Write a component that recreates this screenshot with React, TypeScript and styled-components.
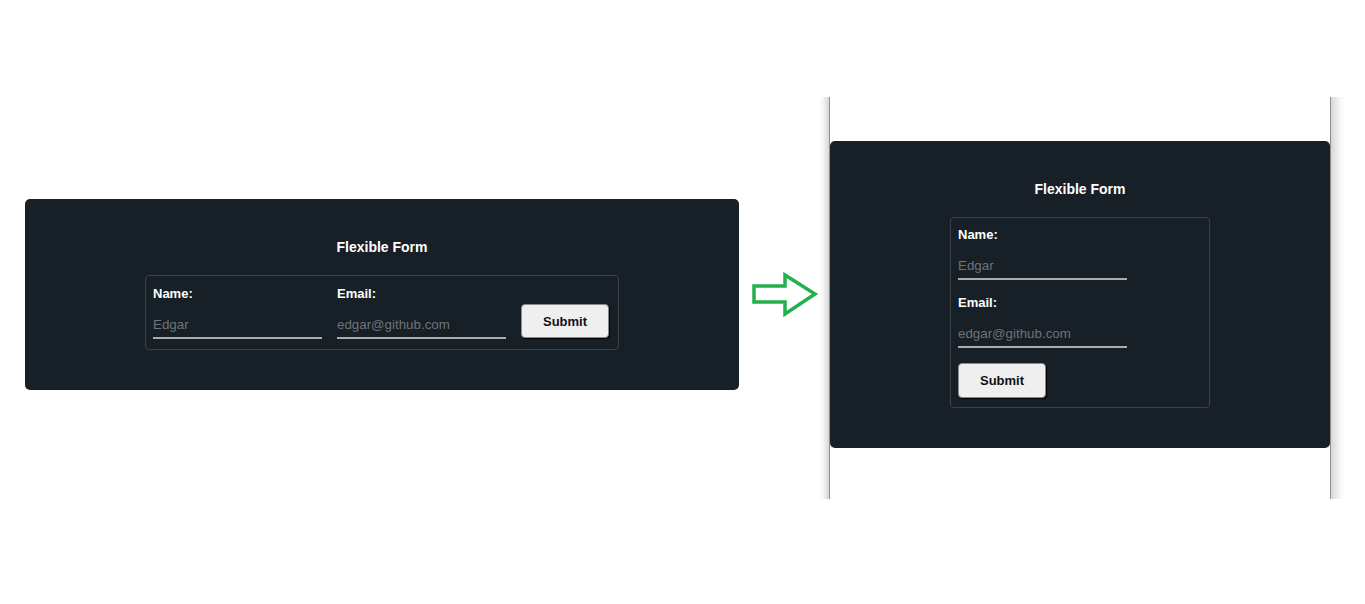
import React from "react";
import styled, { createGlobalStyle } from "styled-components";

const Global = createGlobalStyle`
  html, body { margin: 0; padding: 0; background: #ffffff; }
  body { font-family: "Liberation Sans", Arial, sans-serif; }
`;

const Page = styled.div`
  display: flex;
  align-items: flex-start;
  width: 1365px;
  height: 604px;
  padding-left: 25px;
  box-sizing: border-box;
  background: #ffffff;
  overflow: hidden;
`;

const Card = styled.section<{ $width: number; $top?: number }>`
  width: ${(p) => p.$width}px;
  margin-top: ${(p) => p.$top ?? 0}px;
  box-sizing: border-box;
  background: #171f27;
  border-radius: 5px;
  padding: 40px 0;
  display: flex;
  flex-direction: column;
  align-items: center;
  gap: 20px;
`;

const Title = styled.h2`
  margin: 0;
  font-size: 14px;
  line-height: 16px;
  font-weight: 700;
  color: #ffffff;
`;

const Fieldset = styled.fieldset<{ $stacked?: boolean }>`
  margin: 0;
  min-width: 0;
  box-sizing: border-box;
  border: 1px solid #3b424a;
  border-radius: 4px;
  padding: ${(p) => (p.$stacked ? "9px 9px 9px 7px" : "10px 9px 10px 7px")};
  display: flex;
  flex-direction: ${(p) => (p.$stacked ? "column" : "row")};
  align-items: ${(p) => (p.$stacked ? "flex-start" : "flex-end")};
  gap: 15px;
  width: ${(p) => (p.$stacked ? "260px" : "auto")};
`;

const Field = styled.div`
  display: flex;
  flex-direction: column;
  gap: 6px;
`;

const Label = styled.label`
  font-size: 13px;
  line-height: 15px;
  font-weight: 700;
  color: #ffffff;
`;

const Input = styled.input`
  width: 169px;
  box-sizing: border-box;
  height: 32px;
  padding: 10px 0 5px;
  background: transparent;
  border: none;
  border-bottom: 2px solid #a9abad;
  outline: none;
  font-family: "Liberation Sans", Arial, sans-serif;
  font-size: 13.33px;
  line-height: 15px;
  color: #ffffff;
  &::placeholder { color: #6f7378; }
`;

const Button = styled.button<{ $stacked?: boolean }>`
  width: 88px;
  height: ${(p) => (p.$stacked ? 35 : 34)}px;
  margin-bottom: ${(p) => (p.$stacked ? 0 : 1)}px;
  box-sizing: border-box;
  background: #efefef;
  border: 1px solid #8a8a8a;
  border-radius: 4px;
  box-shadow: 1px 1px 1px #000000;
  font-family: "Liberation Sans", Arial, sans-serif;
  font-size: 13px;
  font-weight: 700;
  color: #111111;
  cursor: pointer;
`;

const Arrow = styled.svg`
  flex: none;
  margin-left: 10px;
  margin-top: 270px;
`;

const Frame = styled.div`
  display: flex;
  margin-top: 97px;
  height: 402px;
`;

const Shade = styled.div<{ $side: "left" | "right" }>`
  width: ${(p) => (p.$side === "left" ? 10 : 14)}px;
  background: linear-gradient(
    ${(p) => (p.$side === "left" ? "to left" : "to right")},
    rgba(0, 0, 0, 0.16),
    rgba(0, 0, 0, 0.04) 60%,
    rgba(0, 0, 0, 0)
  );
`;

const Screen = styled.div`
  width: 502px;
  box-sizing: border-box;
  border-left: 1px solid #8f8f8f;
  border-right: 1px solid #8f8f8f;
  background: #ffffff;
  padding-top: 44px;
`;

function FlexibleForm({ stacked, width, top }: { stacked?: boolean; width: number; top?: number }) {
  return (
    <Card $width={width} $top={top}>
      <Title>Flexible Form</Title>
      <Fieldset $stacked={stacked}>
        <Field>
          <Label>Name:</Label>
          <Input placeholder="Edgar" />
        </Field>
        <Field>
          <Label>Email:</Label>
          <Input placeholder="edgar@github.com" />
        </Field>
        <Button $stacked={stacked}>Submit</Button>
      </Fieldset>
    </Card>
  );
}

export default function App() {
  return (
    <>
      <Global />
      <Page>
        <FlexibleForm width={714} top={199} />
        <Arrow width="70" height="50" viewBox="0 0 70 50">
          <polygon
            points="5,16 36,16 36,5 66,24 36,44 36,32 5,32"
            fill="none"
            stroke="#22b14c"
            strokeWidth="3.5"
            strokeLinejoin="miter"
          />
        </Arrow>
        <Frame>
          <Shade $side="left" />
          <Screen>
            <FlexibleForm width={500} stacked />
          </Screen>
          <Shade $side="right" />
        </Frame>
      </Page>
    </>
  );
}
